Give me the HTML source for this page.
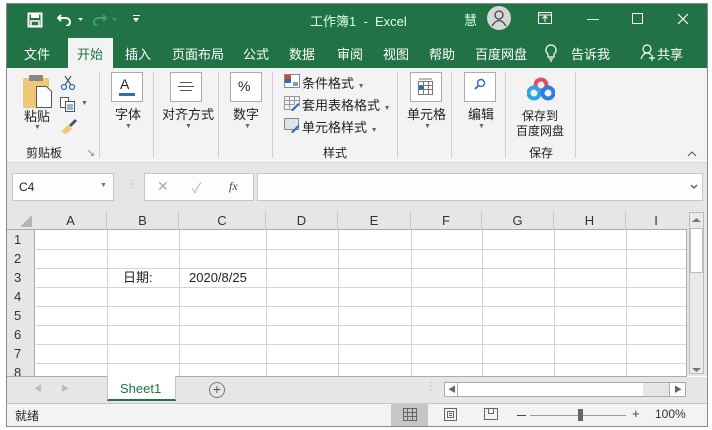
<!DOCTYPE html>
<html><head><meta charset="utf-8"><style>
*{margin:0;padding:0;box-sizing:border-box}
body{width:712px;height:430px;background:#fff;position:relative;overflow:hidden;font-family:"Liberation Sans","Noto Sans CJK SC",sans-serif;font-size:12px;color:#222}
.a{position:absolute}
.t{position:absolute;white-space:nowrap}
.w{color:#fff}
.vl{position:absolute;width:1px;background:#d4d4d4}
.hl{position:absolute;height:1px;background:#d4d4d4}
.ch{position:absolute;top:211px;height:19px;text-align:center;line-height:20px;font-size:13px;color:#333;border-right:1px solid #c8c8c8}
.rh{position:absolute;left:7px;width:28px;height:19px;font-size:13px;line-height:20px;padding-left:7px;color:#333}
.box{position:absolute;background:#fff;border:1px solid #ababab}
.dd{position:absolute;font-size:7px;color:#666}
</style></head><body>
<div class="a" style="left:6px;top:3px;width:702px;height:424px;border:1px solid #8a8a8a"></div>
<div class="a" style="left:7px;top:4px;width:700px;height:64px;background:#217346"></div>
<svg class="a" style="left:27px;top:12px" width="16" height="16" viewBox="0 0 16 16"><rect x="1.5" y="1.5" width="13" height="13" fill="none" stroke="#fff" stroke-width="2"/><rect x="4" y="2" width="8" height="4" fill="#fff"/><rect x="4" y="9" width="8" height="5" fill="none" stroke="#fff" stroke-width="1.5"/></svg>
<svg class="a" style="left:57px;top:12px" width="30" height="14" viewBox="0 0 30 14"><path d="M4 3 L1 6 L4 9 M1 6 H9 a4 4 0 0 1 0 8" fill="none" stroke="#fff" stroke-width="2"/><path d="M21 6 l2.5 3 l2.5-3z" fill="#fff"/></svg>
<svg class="a" style="left:92px;top:12px" width="30" height="14" viewBox="0 0 30 14"><path d="M11 3 L14 6 L11 9 M14 6 H6 a4 4 0 0 0 0 8" fill="none" stroke="#4e9a6c" stroke-width="2"/><path d="M20 6 l2.5 3 l2.5-3z" fill="#4e9a6c"/></svg>
<div class="a" style="left:133px;top:15px;width:7px;height:1px;background:#fff"></div>
<div class="a" style="left:133px;top:18px;width:0;height:0;border-left:3.5px solid transparent;border-right:3.5px solid transparent;border-top:4px solid #fff"></div>
<div class="t" style="left:310px;top:11px;font-size:13px;color:#dfe;">工作簿1 &nbsp;- &nbsp;Excel</div>
<div class="t" style="left:464px;top:10px;font-size:13px;color:#dfe">慧</div>
<div class="a" style="left:487px;top:6px;width:24px;height:24px;border-radius:50%;background:#d6d6d6"></div>
<svg class="a" style="left:491px;top:9px" width="16" height="18" viewBox="0 0 16 18"><circle cx="8" cy="6" r="4" fill="none" stroke="#444" stroke-width="1.3"/><path d="M1 17 Q8 6 15 17" fill="none" stroke="#444" stroke-width="1.3"/></svg>
<svg class="a" style="left:538px;top:12px" width="14" height="12"><rect x=".5" y=".5" width="13" height="11" fill="none" stroke="#fff"/><path d="M7 10V4 M4.5 6.5L7 4l2.5 2.5 M.5 3H13.5" stroke="#fff" fill="none"/></svg>
<div class="a" style="left:587px;top:19px;width:12px;height:1px;background:#fff"></div>
<div class="a" style="left:632px;top:13px;width:11px;height:11px;border:1px solid #fff"></div>
<svg class="a" style="left:677px;top:13px" width="12" height="12"><path d="M1 1L11 11M11 1L1 11" stroke="#fff" stroke-width="1.2"/></svg>
<div class="a" style="left:68px;top:38px;width:45px;height:31px;background:#f3f3f3"></div>
<div class="t w" style="left:24px;top:44px;font-size:13px">文件</div>
<div class="t" style="left:77px;top:44px;font-size:13px;color:#217346">开始</div>
<div class="t w" style="left:125px;top:44px;font-size:13px">插入</div>
<div class="t w" style="left:172px;top:44px;font-size:13px">页面布局</div>
<div class="t w" style="left:243px;top:44px;font-size:13px">公式</div>
<div class="t w" style="left:289px;top:44px;font-size:13px">数据</div>
<div class="t w" style="left:337px;top:44px;font-size:13px">审阅</div>
<div class="t w" style="left:383px;top:44px;font-size:13px">视图</div>
<div class="t w" style="left:429px;top:44px;font-size:13px">帮助</div>
<div class="t w" style="left:475px;top:44px;font-size:13px">百度网盘</div>
<svg class="a" style="left:545px;top:44px" width="12" height="18"><path d="M6 1a5 5 0 0 0-3 9v3h6v-3a5 5 0 0 0-3-9zM4 15h4M5 17h2" fill="none" stroke="#fff" stroke-width="1.2"/></svg>
<div class="t w" style="left:571px;top:44px;font-size:13px">告诉我</div>
<svg class="a" style="left:640px;top:43px" width="16" height="18"><circle cx="7" cy="6" r="4" fill="none" stroke="#fff" stroke-width="1.2"/><path d="M1 16Q3 10 7 10Q10 10 11 12M12 12v6M9 15h6" fill="none" stroke="#fff" stroke-width="1.2"/></svg>
<div class="t w" style="left:657px;top:44px;font-size:13px">共享</div>
<div class="a" style="left:7px;top:68px;width:700px;height:95px;background:#f3f3f3;border-bottom:1px solid #dadada"></div>
<div class="a" style="left:23px;top:78px;width:26px;height:30px;background:#f0c875;border-radius:2px"></div>
<div class="a" style="left:29px;top:75px;width:14px;height:6px;background:#888"></div>
<svg class="a" style="left:36px;top:86px" width="16" height="22"><path d="M.5 .5h10l5 5v16h-15z" fill="#fff" stroke="#555"/></svg>
<div class="t" style="left:24px;top:106px;font-size:13px">粘贴</div>
<div class="dd" style="left:34px;top:124px">▼</div>
<svg class="a" style="left:60px;top:75px" width="16" height="16"><circle cx="4" cy="12" r="2.5" fill="none" stroke="#2a6ebb" stroke-width="1.3"/><circle cx="12" cy="12" r="2.5" fill="none" stroke="#2a6ebb" stroke-width="1.3"/><path d="M5 10L11 1M11 10L5 1" stroke="#555" stroke-width="1.2"/></svg>
<svg class="a" style="left:60px;top:97px" width="16" height="15"><rect x=".5" y=".5" width="8" height="10" fill="#fff" stroke="#555"/><rect x="5.5" y="4.5" width="9" height="10" fill="#fff" stroke="#555"/><path d="M7 8h6M7 10h6M7 12h6" stroke="#2a6ebb"/></svg>
<div class="dd" style="left:81px;top:100px">▼</div>
<svg class="a" style="left:60px;top:118px" width="18" height="16"><path d="M1 14L8 7l4 4-6 5z" fill="#f0c875"/><path d="M10 8l6-6" stroke="#555" stroke-width="3"/></svg>
<div class="t" style="left:26px;top:144px;font-size:12px">剪贴板</div>
<div class="t" style="left:87px;top:148px;font-size:8px;color:#555">↘</div>
<div class="a" style="left:99px;top:72px;width:1px;height:86px;background:#d0d0d0"></div>
<div class="box" style="left:111px;top:72px;width:32px;height:30px"></div>
<div class="t" style="left:120px;top:76px;font-size:14px">A</div>
<div class="a" style="left:119px;top:93px;width:16px;height:3px;background:#2f6fb7"></div>
<div class="t" style="left:115px;top:104px;font-size:13px">字体</div>
<div class="dd" style="left:125px;top:123px">▼</div>
<div class="a" style="left:153px;top:72px;width:1px;height:86px;background:#d0d0d0"></div>
<div class="box" style="left:170px;top:72px;width:32px;height:30px"></div>
<div class="a" style="left:180px;top:82px;width:12px;height:1px;background:#555"></div>
<div class="a" style="left:178px;top:86px;width:16px;height:1px;background:#555"></div>
<div class="a" style="left:180px;top:90px;width:12px;height:1px;background:#555"></div>
<div class="t" style="left:162px;top:104px;font-size:13px">对齐方式</div>
<div class="dd" style="left:185px;top:123px">▼</div>
<div class="a" style="left:218px;top:72px;width:1px;height:86px;background:#d0d0d0"></div>
<div class="box" style="left:230px;top:72px;width:32px;height:30px"></div>
<div class="t" style="left:238px;top:78px;font-size:14px">%</div>
<div class="t" style="left:233px;top:104px;font-size:13px">数字</div>
<div class="dd" style="left:244px;top:123px">▼</div>
<div class="a" style="left:272px;top:72px;width:1px;height:86px;background:#d0d0d0"></div>
<svg class="a" style="left:284px;top:74px" width="16" height="14"><rect x=".5" y=".5" width="15" height="13" fill="#fff" stroke="#888"/><rect x="1" y="1" width="6" height="4" fill="#d24726"/><rect x="1" y="5" width="6" height="4" fill="#2a6ebb"/><path d="M9 9h5M9 11h5" stroke="#333"/></svg>
<div class="t" style="left:302px;top:73px;font-size:13px">条件格式 <span style="font-size:7px;color:#666">▼</span></div>
<svg class="a" style="left:284px;top:96px" width="16" height="15"><path d="M.5.5h15v10M.5.5v13h8M.5 4.5h15M.5 8.5h10M5.5.5v12M10.5.5v8" fill="none" stroke="#999"/><path d="M7 14l7-7 1.5 1.5-7 7z" fill="#2a6ebb"/></svg>
<div class="t" style="left:302px;top:95px;font-size:13px">套用表格格式 <span style="font-size:7px;color:#666">▼</span></div>
<svg class="a" style="left:284px;top:118px" width="16" height="15"><rect x=".5" y=".5" width="14" height="11" fill="#dde4ee" stroke="#888"/><path d="M7 14l7-7 1.5 1.5-7 7z" fill="#2a6ebb"/></svg>
<div class="t" style="left:302px;top:117px;font-size:13px">单元格样式 <span style="font-size:7px;color:#666">▼</span></div>
<div class="t" style="left:323px;top:144px;font-size:12px">样式</div>
<div class="a" style="left:397px;top:72px;width:1px;height:86px;background:#d0d0d0"></div>
<div class="box" style="left:410px;top:72px;width:32px;height:30px"></div>
<svg class="a" style="left:418px;top:78px" width="16" height="18"><rect x=".5" y="3.5" width="14" height="13" fill="#fff" stroke="#777"/><path d="M.5 7.5h14M.5 11.5h14M5.5 3.5v13M10.5 3.5v13M1 1h13" stroke="#777" fill="none"/><rect x="1" y="8" width="4.5" height="3.5" fill="#2a6ebb"/></svg>
<div class="t" style="left:407px;top:104px;font-size:13px">单元格</div>
<div class="dd" style="left:424px;top:123px">▼</div>
<div class="a" style="left:451px;top:72px;width:1px;height:86px;background:#d0d0d0"></div>
<div class="box" style="left:464px;top:72px;width:32px;height:30px"></div>
<svg class="a" style="left:473px;top:78px" width="14" height="14"><circle cx="8" cy="5" r="3.5" fill="none" stroke="#2a6ebb" stroke-width="1.4"/><path d="M5.5 7.5L2 11" stroke="#2a6ebb" stroke-width="1.8"/></svg>
<div class="t" style="left:468px;top:104px;font-size:13px">编辑</div>
<div class="dd" style="left:478px;top:123px">▼</div>
<div class="a" style="left:505px;top:72px;width:1px;height:86px;background:#d0d0d0"></div>
<svg class="a" style="left:527px;top:77px" width="28" height="24"><circle cx="14" cy="8" r="5.5" fill="none" stroke="#e84c5c" stroke-width="4"/><circle cx="7" cy="16" r="5.5" fill="none" stroke="#2aa4ea" stroke-width="4"/><circle cx="21" cy="16" r="5.5" fill="none" stroke="#2a7de1" stroke-width="4"/></svg>
<div class="t" style="left:522px;top:107px;font-size:12px">保存到</div>
<div class="t" style="left:516px;top:122px;font-size:12px">百度网盘</div>
<div class="t" style="left:529px;top:144px;font-size:12px">保存</div>
<div class="a" style="left:575px;top:72px;width:1px;height:86px;background:#d0d0d0"></div>
<svg class="a" style="left:687px;top:150px" width="10" height="7"><path d="M1 6l4-4 4 4" fill="none" stroke="#555"/></svg>
<div class="a" style="left:7px;top:163px;width:700px;height:48px;background:#e6e6e6"></div>
<div class="box" style="left:12px;top:173px;width:102px;height:28px;border-color:#c6c6c6;background:#fdfdfd"></div>
<div class="t" style="left:19px;top:180px;font-size:12px">C4</div>
<div class="dd" style="left:100px;top:182px;color:#777">▼</div>
<div class="t" style="left:127px;top:179px;font-size:10px;color:#aaa">⋮</div>
<div class="box" style="left:144px;top:173px;width:110px;height:28px;border-color:#c6c6c6;background:#fdfdfd"></div>
<div class="t" style="left:157px;top:178px;font-size:14px;color:#aaa">✕</div>
<div class="t" style="left:192px;top:178px;font-size:14px;color:#bbb">✓</div>
<div class="t" style="left:229px;top:179px;font-size:12px;font-style:italic;font-family:'Liberation Serif',serif;color:#444">fx</div>
<div class="box" style="left:257px;top:173px;width:446px;height:28px;border-color:#c6c6c6;background:#fdfdfd"></div>
<svg class="a" style="left:690px;top:184px" width="8" height="6"><path d="M1 1l3 3 3-3" fill="none" stroke="#555" stroke-width="1.3"/></svg>
<div class="a" style="left:7px;top:211px;width:681px;height:19px;background:#e6e6e6;border-bottom:1px solid #ababab"></div>
<svg class="a" style="left:20px;top:215px" width="12" height="12"><path d="M12 0V12H0z" fill="#b5b5b5"/></svg>
<div class="ch" style="left:35px;width:72px">A</div>
<div class="ch" style="left:107px;width:72px">B</div>
<div class="ch" style="left:179px;width:87px">C</div>
<div class="ch" style="left:266px;width:72px">D</div>
<div class="ch" style="left:338px;width:73px">E</div>
<div class="ch" style="left:411px;width:71px">F</div>
<div class="ch" style="left:482px;width:72px">G</div>
<div class="ch" style="left:554px;width:72px">H</div>
<div class="ch" style="left:626px;width:60px;border:none">I</div>
<div class="a" style="left:7px;top:230px;width:28px;height:146px;background:#e6e6e6;border-right:1px solid #ababab"></div>
<div class="rh" style="top:230px">1</div><div class="rh" style="top:249px">2</div><div class="rh" style="top:268px">3</div><div class="rh" style="top:287px">4</div><div class="rh" style="top:306px">5</div><div class="rh" style="top:325px">6</div><div class="rh" style="top:344px">7</div><div class="rh" style="top:363px;height:13px;overflow:hidden">8</div>
<div class="hl" style="left:36px;top:249px;width:650px"></div>
<div class="hl" style="left:36px;top:268px;width:650px"></div>
<div class="hl" style="left:36px;top:287px;width:650px"></div>
<div class="hl" style="left:36px;top:306px;width:650px"></div>
<div class="hl" style="left:36px;top:325px;width:650px"></div>
<div class="hl" style="left:36px;top:344px;width:650px"></div>
<div class="hl" style="left:36px;top:363px;width:650px"></div>
<div class="vl" style="left:107px;top:230px;height:146px"></div>
<div class="vl" style="left:179px;top:230px;height:146px"></div>
<div class="vl" style="left:266px;top:230px;height:146px"></div>
<div class="vl" style="left:338px;top:230px;height:146px"></div>
<div class="vl" style="left:411px;top:230px;height:146px"></div>
<div class="vl" style="left:482px;top:230px;height:146px"></div>
<div class="vl" style="left:554px;top:230px;height:146px"></div>
<div class="vl" style="left:626px;top:230px;height:146px"></div>
<div class="a" style="left:686px;top:230px;width:1px;height:146px;background:#ababab"></div>
<div class="t" style="left:123px;top:270px;font-size:13px;line-height:16px">日期:</div>
<div class="t" style="left:189px;top:270px;font-size:13px;line-height:16px">2020/8/25</div>
<div class="a" style="left:687px;top:211px;width:20px;height:165px;background:#e6e6e6"></div>
<div class="a" style="left:689px;top:212px;width:15px;height:162px;background:#e9e9e9;border:1px solid #bbb"></div>
<div class="a" style="left:690px;top:228px;width:13px;height:45px;background:#fff;border:1px solid #bbb"></div>
<svg class="a" style="left:692px;top:217px" width="9" height="6"><path d="M0 5l4.5-4 4.5 4z" fill="#777"/></svg>
<svg class="a" style="left:692px;top:367px" width="9" height="6"><path d="M0 1l4.5 4 4.5-4z" fill="#777"/></svg>
<div class="a" style="left:7px;top:376px;width:680px;height:1px;background:#ababab"></div>
<div class="a" style="left:7px;top:377px;width:700px;height:27px;background:#e6e6e6;border-bottom:1px solid #c6c6c6"></div>
<div class="t" style="left:34px;top:383px;font-size:8px;color:#bbb">◀</div>
<div class="t" style="left:61px;top:383px;font-size:8px;color:#bbb">▶</div>
<div class="a" style="left:107px;top:376px;width:69px;height:25px;background:#fff;border:1px solid #c6c6c6;border-top:none;border-bottom:2px solid #217346"></div>
<div class="t" style="left:120px;top:381px;font-size:13px;color:#217346">Sheet1</div>
<div class="a" style="left:209px;top:382px;width:16px;height:16px;border-radius:50%;border:1px solid #777;text-align:center;line-height:13px;font-size:14px;color:#555">+</div>
<div class="t" style="left:426px;top:381px;font-size:10px;color:#aaa">⋮</div>
<div class="a" style="left:444px;top:382px;width:242px;height:15px;background:#fff;border:1px solid #ababab"></div>
<div class="a" style="left:445px;top:383px;width:13px;height:13px;border-right:1px solid #ababab"></div>
<div class="t" style="left:448px;top:384px;font-size:8px;color:#666">◀</div>
<div class="a" style="left:643px;top:383px;width:26px;height:13px;background:#e6e6e6"></div>
<div class="a" style="left:669px;top:383px;width:16px;height:13px;border-left:1px solid #ababab"></div>
<div class="t" style="left:674px;top:384px;font-size:8px;color:#666">▶</div>
<div class="a" style="left:7px;top:404px;width:700px;height:22px;background:#f3f3f3"></div>
<div class="t" style="left:15px;top:407px;font-size:12px">就绪</div>
<div class="a" style="left:391px;top:404px;width:37px;height:22px;background:#c6c6c6"></div>
<svg class="a" style="left:403px;top:408px" width="14" height="13"><path d="M.5.5h13v12H.5zM.5 4.5h13M.5 8.5h13M4.5.5v12M9.5.5v12" fill="none" stroke="#666"/></svg>
<svg class="a" style="left:444px;top:408px" width="13" height="13"><rect x=".5" y=".5" width="12" height="12" fill="none" stroke="#666"/><rect x="3.5" y="3.5" width="6" height="6" fill="none" stroke="#666"/><path d="M5 5.5h3M5 7.5h3" stroke="#666"/></svg>
<svg class="a" style="left:484px;top:408px" width="14" height="12"><path d="M.5.5h13v11H.5zM4.5.5v5h5v-5" fill="none" stroke="#666"/></svg>
<div class="a" style="left:517px;top:415px;width:9px;height:1px;background:#444"></div>
<div class="a" style="left:530px;top:415px;width:96px;height:1px;background:#999"></div>
<div class="a" style="left:578px;top:409px;width:5px;height:12px;background:#666"></div>
<div class="t" style="left:632px;top:406px;font-size:13px;color:#444">+</div>
<div class="t" style="left:655px;top:407px;font-size:12px;color:#333">100%</div>
</body></html>
